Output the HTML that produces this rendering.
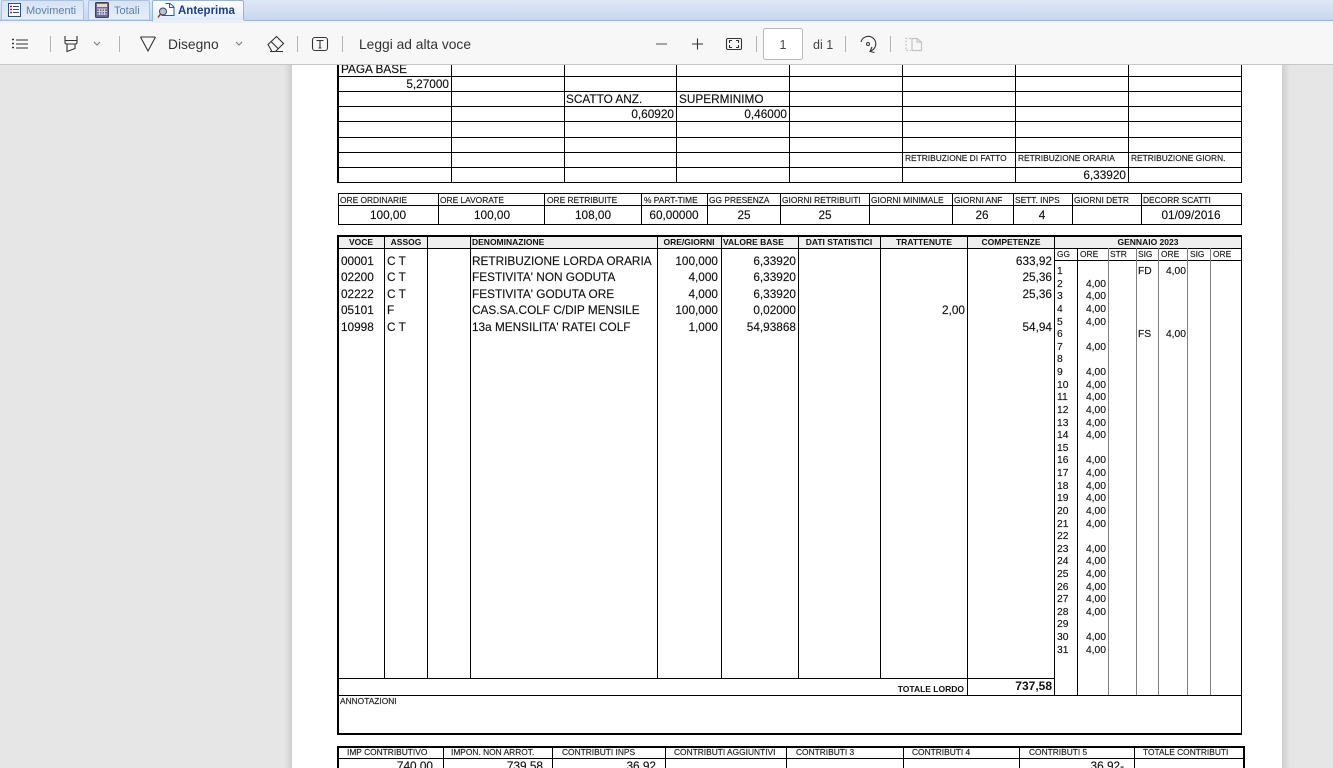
<!DOCTYPE html>
<html lang="it"><head><meta charset="utf-8"><title>Anteprima</title>
<style>
html,body{margin:0;padding:0;width:1333px;height:768px;overflow:hidden;background:#e6e6e6}
svg{display:block;position:absolute;left:0;top:0}
text{font-family:"Liberation Sans",Arial,sans-serif;fill:#111}
.m{font-size:11.8px;stroke:#111;stroke-width:.14}.l{font-size:8.4px;fill:#222;stroke:#222;stroke-width:.16}.b{font-size:8.5px;font-weight:bold}.c{font-size:10.3px;stroke:#111;stroke-width:.14}
.e{text-anchor:end}.x{text-anchor:middle}
.ui{font-size:13.8px;fill:#333}
.i{fill:none;stroke:#333;stroke-width:1.1}
.v{fill:none;stroke:#777;stroke-width:1}
</style></head><body>
<svg width="1333" height="768" viewBox="0 0 1333 768" xmlns="http://www.w3.org/2000/svg">
<defs>
<linearGradient id="top" x1="0" y1="0" x2="0" y2="1"><stop offset="0" stop-color="#dfe8f6"/><stop offset="1" stop-color="#c8d7ee"/></linearGradient>
<linearGradient id="tab" x1="0" y1="0" x2="0" y2="1"><stop offset="0" stop-color="#d6e3f5"/><stop offset="1" stop-color="#e6effa"/></linearGradient>
<linearGradient id="act" x1="0" y1="0" x2="0" y2="1"><stop offset="0" stop-color="#fff"/><stop offset="1" stop-color="#dfeafa"/></linearGradient>
<linearGradient id="sl" x1="0" y1="0" x2="1" y2="0"><stop offset="0" stop-color="#e6e6e6"/><stop offset="1" stop-color="#cfcfcf"/></linearGradient>
<linearGradient id="sr" x1="0" y1="0" x2="1" y2="0"><stop offset="0" stop-color="#cfcfcf"/><stop offset="1" stop-color="#e6e6e6"/></linearGradient>
</defs>
<!-- page -->
<rect x="284" y="65" width="8" height="703" fill="url(#sl)"/>
<rect x="1282" y="65" width="8" height="703" fill="url(#sr)"/>
<rect x="292" y="65" width="990" height="703" fill="#fff"/>

<!-- document lines -->
<g shape-rendering="crispEdges" fill="#000">
<!-- table 1 -->
<rect x="337" y="65" width="2" height="118"/>
<rect x="451" y="65" width="1" height="118"/><rect x="564" y="65" width="1" height="118"/><rect x="676" y="65" width="1" height="118"/><rect x="789" y="65" width="1" height="118"/><rect x="902" y="65" width="1" height="118"/><rect x="1015" y="65" width="1" height="118"/><rect x="1128" y="65" width="1" height="118"/><rect x="1241" y="65" width="1" height="118"/>
<rect x="338" y="76" width="904" height="1"/><rect x="338" y="91" width="904" height="1"/><rect x="338" y="106" width="904" height="1"/><rect x="338" y="121" width="904" height="1"/><rect x="338" y="137" width="904" height="1"/><rect x="338" y="152" width="904" height="1"/><rect x="338" y="167" width="904" height="1"/><rect x="338" y="182" width="904" height="1"/>
<!-- table 2 -->
<rect x="338" y="193" width="904" height="1"/><rect x="338" y="205" width="904" height="1"/><rect x="338" y="224" width="904" height="1"/>
<rect x="338" y="193" width="1" height="32"/><rect x="438" y="193" width="1" height="32"/><rect x="544" y="193" width="1" height="32"/><rect x="641" y="193" width="1" height="32"/><rect x="707" y="193" width="1" height="32"/><rect x="780" y="193" width="1" height="32"/><rect x="869" y="193" width="1" height="32"/><rect x="952" y="193" width="1" height="32"/><rect x="1013" y="193" width="1" height="32"/><rect x="1072" y="193" width="1" height="32"/><rect x="1141" y="193" width="1" height="32"/><rect x="1241" y="193" width="1" height="32"/>
<!-- table 3 -->
<rect x="338" y="236" width="903" height="12" fill="#efefef"/>
<rect x="338" y="235" width="904" height="2"/><rect x="338" y="248" width="716" height="1"/><rect x="1054" y="248" width="188" height="1"/>
<rect x="1054" y="260" width="187" height="1"/>
<rect x="337" y="235" width="2" height="499"/><rect x="1241" y="235" width="1" height="499"/>
<rect x="384" y="236" width="1" height="442"/><rect x="427" y="236" width="1" height="442"/><rect x="470" y="236" width="1" height="442"/><rect x="657" y="236" width="1" height="442"/><rect x="721" y="236" width="1" height="442"/><rect x="798" y="248" width="1" height="430"/><rect x="798" y="236" width="1" height="12"/><rect x="880" y="236" width="1" height="442"/><rect x="967" y="236" width="1" height="459"/><rect x="1054" y="236" width="1" height="459"/>
<rect x="1077" y="248" width="1" height="447"/>
<g fill="#808080"><rect x="1108" y="248" width="1" height="447"/><rect x="1136" y="248" width="1" height="447"/><rect x="1158" y="248" width="1" height="447"/><rect x="1187" y="248" width="1" height="447"/><rect x="1210" y="248" width="1" height="447"/></g>
<rect x="338" y="678" width="716" height="1"/><rect x="338" y="695" width="904" height="1"/><rect x="337" y="733" width="905" height="2"/>
<!-- table 4 -->
<rect x="337" y="746" width="907" height="2"/><rect x="338" y="758" width="905" height="1"/><rect x="337" y="746" width="2" height="22"/><rect x="1243" y="746" width="2" height="22"/>
<rect x="443" y="747" width="1" height="21"/><rect x="552" y="747" width="1" height="21"/><rect x="665" y="747" width="1" height="21"/><rect x="786" y="747" width="1" height="21"/><rect x="903" y="747" width="1" height="21"/><rect x="1019" y="747" width="1" height="21"/><rect x="1134" y="747" width="1" height="21"/>
</g>

<!-- table 1 text -->
<text class="m" x="341" y="73">PAGA BASE</text>
<text class="m e" x="449" y="88">5,27000</text>
<text class="m" x="566" y="103">SCATTO ANZ.</text>
<text class="m" x="679" y="103">SUPERMINIMO</text>
<text class="m e" x="674" y="118">0,60920</text>
<text class="m e" x="787" y="118">0,46000</text>
<text class="l" x="905" y="161">RETRIBUZIONE DI FATTO</text>
<text class="l" x="1018" y="161">RETRIBUZIONE ORARIA</text>
<text class="l" x="1131" y="161">RETRIBUZIONE GIORN.</text>
<text class="m e" x="1126" y="179">6,33920</text>

<!-- table 2 text -->
<text class="l" x="340" y="203">ORE ORDINARIE</text><text class="l" x="440" y="203">ORE LAVORATE</text><text class="l" x="547" y="203">ORE RETRIBUITE</text><text class="l" x="644" y="203">% PART-TIME</text><text class="l" x="709" y="203">GG PRESENZA</text><text class="l" x="782" y="203">GIORNI RETRIBUITI</text><text class="l" x="871" y="203">GIORNI MINIMALE</text><text class="l" x="954" y="203">GIORNI ANF</text><text class="l" x="1015" y="203">SETT. INPS</text><text class="l" x="1074" y="203">GIORNI DETR</text><text class="l" x="1143" y="203">DECORR SCATTI</text>
<text class="m x" x="388" y="219">100,00</text><text class="m x" x="492" y="219">100,00</text><text class="m x" x="593" y="219">108,00</text><text class="m x" x="674" y="219">60,00000</text><text class="m x" x="744" y="219">25</text><text class="m x" x="825" y="219">25</text><text class="m x" x="982" y="219">26</text><text class="m x" x="1042" y="219">4</text><text class="m x" x="1191" y="219">01/09/2016</text>

<!-- table 3 header -->
<text class="b x" x="361" y="245">VOCE</text><text class="b x" x="406" y="245">ASSOG</text><text class="b" x="472" y="245">DENOMINAZIONE</text><text class="b x" x="689" y="245">ORE/GIORNI</text><text class="b" x="723" y="245">VALORE BASE</text><text class="b x" x="839" y="245">DATI STATISTICI</text><text class="b x" x="924" y="245">TRATTENUTE</text><text class="b x" x="1011" y="245">COMPETENZE</text><text class="b x" x="1148" y="245">GENNAIO 2023</text>
<text class="l" x="1057" y="257">GG</text><text class="l" x="1080" y="257">ORE</text><text class="l" x="1110" y="257">STR</text><text class="l" x="1138" y="257">SIG</text><text class="l" x="1161" y="257">ORE</text><text class="l" x="1190" y="257">SIG</text><text class="l" x="1213" y="257">ORE</text>

<!-- table 3 rows -->
<text class="m" x="341" y="265">00001</text><text class="m" x="387" y="265">C T</text><text class="m" x="472" y="265">RETRIBUZIONE LORDA ORARIA</text><text class="m e" x="718" y="265">100,000</text><text class="m e" x="796" y="265">6,33920</text><text class="m e" x="1052" y="265">633,92</text>
<text class="m" x="341" y="281">02200</text><text class="m" x="387" y="281">C T</text><text class="m" x="472" y="281">FESTIVITA' NON GODUTA</text><text class="m e" x="718" y="281">4,000</text><text class="m e" x="796" y="281">6,33920</text><text class="m e" x="1052" y="281">25,36</text>
<text class="m" x="341" y="298">02222</text><text class="m" x="387" y="298">C T</text><text class="m" x="472" y="298">FESTIVITA' GODUTA ORE</text><text class="m e" x="718" y="298">4,000</text><text class="m e" x="796" y="298">6,33920</text><text class="m e" x="1052" y="298">25,36</text>
<text class="m" x="341" y="314">05101</text><text class="m" x="387" y="314">F</text><text class="m" x="472" y="314">CAS.SA.COLF C/DIP MENSILE</text><text class="m e" x="718" y="314">100,000</text><text class="m e" x="796" y="314">0,02000</text><text class="m e" x="965" y="314">2,00</text>
<text class="m" x="341" y="331">10998</text><text class="m" x="387" y="331">C T</text><text class="m" x="472" y="331">13a MENSILITA' RATEI COLF</text><text class="m e" x="718" y="331">1,000</text><text class="m e" x="796" y="331">54,93868</text><text class="m e" x="1052" y="331">54,94</text>

<!-- calendar -->
<g>
<text class="c" x="1057" y="274">1</text><text class="c" x="1057" y="287">2</text><text class="c" x="1057" y="299">3</text><text class="c" x="1057" y="312">4</text><text class="c" x="1057" y="325">5</text><text class="c" x="1057" y="337">6</text><text class="c" x="1057" y="350">7</text><text class="c" x="1057" y="362">8</text><text class="c" x="1057" y="375">9</text><text class="c" x="1057" y="388">10</text><text class="c" x="1057" y="400">11</text><text class="c" x="1057" y="413">12</text><text class="c" x="1057" y="426">13</text><text class="c" x="1057" y="438">14</text><text class="c" x="1057" y="451">15</text><text class="c" x="1057" y="463">16</text><text class="c" x="1057" y="476">17</text><text class="c" x="1057" y="489">18</text><text class="c" x="1057" y="501">19</text><text class="c" x="1057" y="514">20</text><text class="c" x="1057" y="527">21</text><text class="c" x="1057" y="539">22</text><text class="c" x="1057" y="552">23</text><text class="c" x="1057" y="564">24</text><text class="c" x="1057" y="577">25</text><text class="c" x="1057" y="590">26</text><text class="c" x="1057" y="602">27</text><text class="c" x="1057" y="615">28</text><text class="c" x="1057" y="627">29</text><text class="c" x="1057" y="640">30</text><text class="c" x="1057" y="653">31</text>
<text class="c e" x="1106" y="287">4,00</text><text class="c e" x="1106" y="299">4,00</text><text class="c e" x="1106" y="312">4,00</text><text class="c e" x="1106" y="325">4,00</text><text class="c e" x="1106" y="350">4,00</text><text class="c e" x="1106" y="375">4,00</text><text class="c e" x="1106" y="388">4,00</text><text class="c e" x="1106" y="400">4,00</text><text class="c e" x="1106" y="413">4,00</text><text class="c e" x="1106" y="426">4,00</text><text class="c e" x="1106" y="438">4,00</text><text class="c e" x="1106" y="463">4,00</text><text class="c e" x="1106" y="476">4,00</text><text class="c e" x="1106" y="489">4,00</text><text class="c e" x="1106" y="501">4,00</text><text class="c e" x="1106" y="514">4,00</text><text class="c e" x="1106" y="527">4,00</text><text class="c e" x="1106" y="552">4,00</text><text class="c e" x="1106" y="564">4,00</text><text class="c e" x="1106" y="577">4,00</text><text class="c e" x="1106" y="590">4,00</text><text class="c e" x="1106" y="602">4,00</text><text class="c e" x="1106" y="615">4,00</text><text class="c e" x="1106" y="640">4,00</text><text class="c e" x="1106" y="653">4,00</text>
<text class="c" x="1138" y="274">FD</text><text class="c e" x="1186" y="274">4,00</text>
<text class="c" x="1138" y="337">FS</text><text class="c e" x="1186" y="337">4,00</text>
</g>

<text class="b e" x="964" y="692">TOTALE LORDO</text>
<text class="e" x="1052" y="690" style="font-size:12px;font-weight:bold">737,58</text>
<text class="l" x="340" y="704">ANNOTAZIONI</text>

<!-- table 4 text -->
<text class="l" x="347" y="755">IMP CONTRIBUTIVO</text><text class="l" x="451" y="755">IMPON. NON ARROT.</text><text class="l" x="562" y="755">CONTRIBUTI INPS</text><text class="l" x="674" y="755">CONTRIBUTI AGGIUNTIVI</text><text class="l" x="796" y="755">CONTRIBUTI 3</text><text class="l" x="912" y="755">CONTRIBUTI 4</text><text class="l" x="1029" y="755">CONTRIBUTI 5</text><text class="l" x="1143" y="755">TOTALE CONTRIBUTI</text>
<text class="m e" x="433" y="770">740,00</text><text class="m e" x="543" y="770">739,58</text><text class="m e" x="656" y="770">36,92</text><text class="m e" x="1124" y="770">36,92-</text>

<!-- toolbar -->
<rect x="0" y="23" width="1333" height="41" fill="#f7f7f7"/>
<rect x="0" y="64" width="1333" height="1" fill="#c6c6c6" shape-rendering="crispEdges"/>
<!-- tab strip -->
<rect x="0" y="0" width="1333" height="20" fill="url(#top)"/>
<rect x="0" y="20" width="1333" height="1" fill="#8fb4e6" shape-rendering="crispEdges"/>
<rect x="0" y="21" width="1333" height="2" fill="#eef3fb" shape-rendering="crispEdges"/>
<path d="M1.5 20V2q0-1.5 1.5-1.5h79q1.5 0 1.5 1.5v18z" fill="url(#tab)" stroke="#a9c3e8"/>
<path d="M88.500 20V2q0-1.500 1.500-1.500h58q1.500 0 1.500 1.500v18z" fill="url(#tab)" stroke="#a9c3e8"/>
<path d="M152.500 21V2q0-1.500 1.500-1.500h88q1.500 0 1.500 1.500v19z" fill="url(#act)" stroke="#8fb4e6"/>
<rect x="153" y="20" width="91" height="3" fill="#e9f0fb" shape-rendering="crispEdges"/>
<text x="26" y="14" style="font-size:11px;fill:#5f7fa8">Movimenti</text>
<text x="114" y="14" style="font-size:11px;fill:#5f7fa8">Totali</text>
<text x="178" y="14" style="font-size:11.500px;font-weight:bold;fill:#1d3f8c">Anteprima</text>
<!-- tab icons -->
<rect x="8.500" y="3.500" width="12" height="13" fill="#fff" stroke="#2c4f94"/>
<path d="M10 6.500h2M10 9.500h2M10 12.500h2" stroke="#c02020" stroke-width="1.500" fill="none"/>
<path d="M13 6.500h6M13 9.500h6M13 12.500h6" stroke="#2c4f94" fill="none"/>
<rect x="95.500" y="2.500" width="13" height="15" rx="1" fill="#6b6a92" stroke="#3e3d66"/>
<rect x="97" y="4" width="10" height="3" fill="#f0d9c0"/>
<path d="M97 9h10M97 11.500h10M97 14h10M99.500 8.500v6.500M102 8.500v6.500M104.500 8.500v6.500" stroke="#e6e6f0" stroke-width=".8" fill="none"/>
<path d="M165.500 3.500h4.500l4 3.500v8.500h-12V8" fill="#fff" stroke="#2c5aa8"/>
<path d="M169.500 3.500v4h4.500" fill="none" stroke="#2c5aa8"/>
<circle cx="163" cy="11.500" r="3.500" fill="#b8c4d4" stroke="#444"/>
<path d="M160.500 14l-2.500 3.500" stroke="#b03020" stroke-width="1.500" fill="none"/>

<!-- toolbar icons -->
<g class="i">
<path d="M16 40h12M16 44h12M16 48h12"/>
<path d="M12 39.500h2M12 43.500h2M12 47.500h2" style="stroke-width:1.6"/>
</g>
<g fill="#b4b4b4" shape-rendering="crispEdges"><rect x="50" y="36" width="1" height="16"/><rect x="119" y="36" width="1" height="16"/><rect x="297" y="36" width="1" height="16"/><rect x="342" y="36" width="1" height="16"/><rect x="756" y="36" width="1" height="16"/><rect x="845" y="36" width="1" height="16"/><rect x="890" y="36" width="1" height="16"/></g>
<path class="i" d="M65 36v6.500q0 1.500 1.500 1.500h9q1.500 0 1.500-1.500V36M65 40.500h12M67 44v7.500l8-3V44"/>
<path class="v" d="M94 42l3 3 3-3"/>
<path class="i" d="M140.500 37h14.500M140.500 37l7.500 14 7.500-14"/>
<text class="ui" x="168" y="49">Disegno</text>
<path class="v" d="M236 42l3 3 3-3"/>
<path class="i" d="M268 44.500l8.500-8 7 7-8 8h-3.500zM271 41.500l7 7M270 51.500h13"/>
<rect class="i" x="312.500" y="37.500" width="15" height="13" rx="2.500"/>
<path class="i" d="M316.500 40.500h7M320 40.500v7.500M318.500 48h3"/>
<text class="ui" x="359" y="49">Leggi ad alta voce</text>
<path d="M656 44h11" stroke="#888" stroke-width="1.500" fill="none"/>
<path class="i" d="M692 44h11M697.500 38.500v11"/>
<rect class="i" x="726.500" y="38.500" width="15" height="11" rx="1.500"/>
<path class="i" d="M729.500 43v-2.500h2.500M736 40.500h2.500V43M738.500 45v2.500H736M732 47.500h-2.500V45"/>
<rect x="763.500" y="28.500" width="39" height="31" rx="2" fill="#fff" stroke="#bbb"/>
<text x="783" y="49" text-anchor="middle" style="font-size:12.500px;fill:#444">1</text>
<text x="813" y="49" style="font-size:12.500px;fill:#444">di 1</text>
<path class="i" d="M861 42a7.500 7.500 0 1 1 9.500 9M872 47l-2 4.500 4.500 1"/>
<circle cx="868" cy="44" r="1.500" fill="none" stroke="#333"/>
<path d="M911 38.500h-5v12h5" fill="none" stroke="#c4c4c4" stroke-width="1.200" stroke-dasharray="2 1.500"/>
<path d="M912 38.500h5l4.500 3.500v8.500H912zM917 38.500v3.500h4.500M912 38.500v12" fill="none" stroke="#c4c4c4" stroke-width="1.200"/>
</svg>
</body></html>
